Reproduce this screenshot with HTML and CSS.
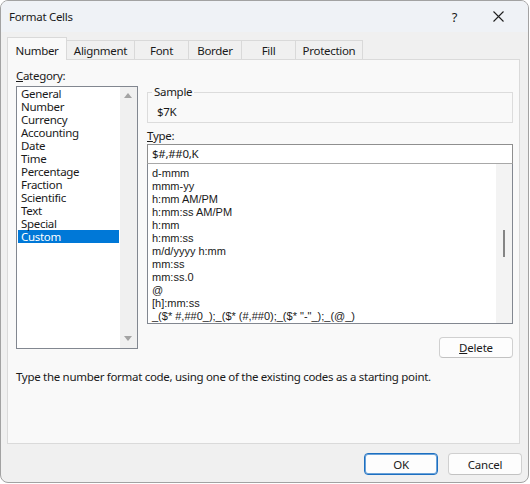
FILE: index.html
```html
<!DOCTYPE html>
<html lang="en">

<head>
    <meta charset="UTF-8">
    <title>Format Cells</title>
    <link rel="stylesheet" href="styles.css">
</head>

<body>
    <div class="window">
        <div class="titlebar">
            <span class="title">Format Cells</span>
            <span class="help">?</span>
            <svg class="close" width="11" height="11" viewBox="0 0 11 11">
                <path d="M0.5 0.5 L10.5 10.5 M10.5 0.5 L0.5 10.5" stroke="#1f1f1f" stroke-width="1.1" fill="none"/>
            </svg>
        </div>

        <div class="tabs">
            <div class="tab active">Number</div>
            <div class="tab w-align">Alignment</div>
            <div class="tab w-font">Font</div>
            <div class="tab w-border">Border</div>
            <div class="tab w-fill">Fill</div>
            <div class="tab w-prot">Protection</div>
        </div>

        <div class="panel">
            <div class="main">
                <div class="category">
                    <div class="label"><u>C</u>ategory:</div>
                    <div class="listbox">
                        <ul class="cat-items">
                            <li>General</li>
                            <li>Number</li>
                            <li>Currency</li>
                            <li>Accounting</li>
                            <li>Date</li>
                            <li>Time</li>
                            <li>Percentage</li>
                            <li>Fraction</li>
                            <li>Scientific</li>
                            <li>Text</li>
                            <li>Special</li>
                            <li class="selected">Custom</li>
                        </ul>
                        <div class="vscroll">
                            <span class="arrow-up"></span>
                            <span class="arrow-down"></span>
                        </div>
                    </div>
                </div>

                <div class="format">
                    <fieldset class="sample">
                        <legend>Sample</legend>
                        <div class="sample-value">$7K</div>
                    </fieldset>

                    <div class="label type-label"><u>T</u>ype:</div>
                    <div class="type-input">$#,##0,K</div>
                    <div class="type-list">
                        <ul class="codes">
                            <li>d-mmm</li>
                            <li>mmm-yy</li>
                            <li>h:mm AM/PM</li>
                            <li>h:mm:ss AM/PM</li>
                            <li>h:mm</li>
                            <li>h:mm:ss</li>
                            <li>m/d/yyyy h:mm</li>
                            <li>mm:ss</li>
                            <li>mm:ss.0</li>
                            <li>@</li>
                            <li>[h]:mm:ss</li>
                            <li>_($* #,##0_);_($* (#,##0);_($* "-"_);_(@_)</li>
                        </ul>
                        <div class="track"><span class="thumb"></span></div>
                    </div>

                    <div class="delete-row">
                        <button class="btn"><u>D</u>elete</button>
                    </div>
                </div>
            </div>

            <p class="hint">Type the number format code, using one of the existing codes as a starting point.</p>
        </div>

        <div class="footer">
            <button class="btn default">OK</button>
            <button class="btn">Cancel</button>
        </div>
    </div>
</body>

</html>
```

FILE: styles.css
```css
* {
    margin: 0;
    padding: 0;
    box-sizing: border-box;
}

body {
    width: 530px;
    height: 484px;
    background: #ffffff;
    font-family: "Noto Sans", sans-serif;
    font-size: 11.5px;
    letter-spacing: -0.3px;
    color: #1a1a1a;
}

.window {
    width: 529px;
    height: 483px;
    border: 1px solid #a2a2a2;
    border-radius: 8px;
    background: #f0f0f0;
    overflow: hidden;
    display: flex;
    flex-direction: column;
}

/* title bar */
.titlebar {
    height: 31px;
    flex: none;
    display: flex;
    align-items: center;
    padding-left: 8px;
    background: #eff2f6;
}

.title {
    flex: 1;
    line-height: 16px;
}

.help {
    font-size: 13px;
    margin-right: 36px;
}

.close {
    margin-right: 24px;
}

/* tab strip */
.tabs {
    display: flex;
    align-items: flex-end;
    height: 23px;
    margin: 5px 0 -1px 6px;
    position: relative;
    z-index: 1;
}

.tab {
    height: 19px;
    margin-bottom: 1px;
    margin-left: -1px;
    border: 1px solid #d9d9d9;
    border-bottom: none;
    background: #f0f0f0;
    text-align: center;
    line-height: 19px;
}

.tab.active {
    width: 60px;
    height: 23px;
    margin: 0;
    background: #f9f9f9;
    line-height: 26px;
}

.w-align { width: 69px; }
.w-font { width: 55px; }
.w-border { width: 54px; }
.w-fill { width: 55px; }
.w-prot { width: 68px; }

/* tab page */
.panel {
    height: 385px;
    margin: 0 8px 0 6px;
    padding: 8px 6px 0 8px;
    border: 1px solid #dadada;
    background: #f9f9f9;
}

.main {
    display: flex;
    gap: 9px;
}

.label {
    line-height: 16px;
}

.category {
    width: 122px;
}

.category .label {
    margin-bottom: 2px;
}

.listbox {
    height: 263px;
    border: 1px solid #828790;
    background: #ffffff;
    display: flex;
}

.cat-items {
    list-style: none;
    flex: 1;
    padding: 0 1px 0 1px;
}

.cat-items li {
    height: 13px;
    line-height: 13px;
    padding-left: 3px;
}

.cat-items li.selected {
    background: #0078d7;
    color: #ffffff;
}

.vscroll {
    width: 17px;
    background: #f0f0f0;
    position: relative;
}

.arrow-up,
.arrow-down {
    position: absolute;
    left: 4px;
    border-left: 4px solid transparent;
    border-right: 4px solid transparent;
}

.arrow-up {
    top: 6px;
    border-bottom: 5px solid #a3a3a3;
}

.arrow-down {
    bottom: 7px;
    border-top: 5px solid #a3a3a3;
}

/* right column */
.format {
    width: 366px;
}

.sample {
    margin-top: 17px;
    border: 1px solid #dcdcdc;
    padding: 0 0 2px 4px;
}

.sample legend {
    padding: 0 2px;
    line-height: 14px;
}

.sample-value {
    padding: 5px 0 0 5px;
    line-height: 16px;
}

.type-label {
    margin-top: 5px;
}

.type-input {
    height: 20px;
    border: 1px solid #8f8f8f;
    border-bottom-color: #a8a8a8;
    background: #ffffff;
    padding-left: 4px;
    line-height: 18px;
}

.type-list {
    height: 160px;
    border: 1px solid #828790;
    border-top: none;
    background: #ffffff;
    display: flex;
}

.codes {
    flex: 1;
    list-style: none;
    padding: 3px 0 0 4px;
    font-family: "Liberation Sans", Arial, sans-serif;
    font-size: 11px;
    letter-spacing: 0;
}

.codes li {
    height: 13px;
    line-height: 13px;
    white-space: nowrap;
}

.track {
    width: 16px;
    background: #f3f3f3;
    padding: 66px 0 0 7px;
}

.thumb {
    display: block;
    width: 2px;
    height: 27px;
    background: #858585;
}

.delete-row {
    display: flex;
    justify-content: flex-end;
    margin-top: 13px;
}

.btn {
    width: 74px;
    height: 21px;
    border: 1px solid #d0d0d0;
    border-bottom-color: #c2c2c2;
    border-radius: 4px;
    background: #fdfdfd;
    font-family: inherit;
    font-size: 11.5px;
    letter-spacing: -0.2px;
    color: #1a1a1a;
}

.hint {
    margin-top: 11px;
    line-height: 16px;
}

/* dialog buttons */
.footer {
    display: flex;
    justify-content: flex-end;
    gap: 10px;
    margin-top: 9px;
    padding-right: 6px;
}

.footer .btn {
    height: 22px;
}

.btn.default {
    border: 1px solid #1d6fc0;
    box-shadow: inset 0 0 0 1px #6aa2d9;
}
```
